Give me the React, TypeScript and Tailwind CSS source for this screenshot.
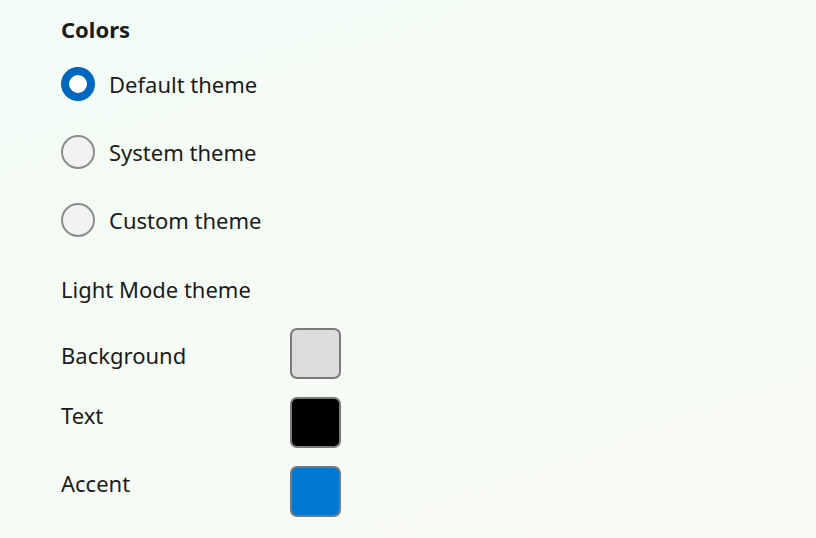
import React, { useState } from "react";

type ThemeOption = "default" | "system" | "custom";

const options: { id: ThemeOption; label: string }[] = [
  { id: "default", label: "Default theme" },
  { id: "system", label: "System theme" },
  { id: "custom", label: "Custom theme" },
];

const swatches = [
  { label: "Background", color: "#dcdcdc", labelClass: "mt-[10px]" },
  { label: "Text", color: "#000000", labelClass: "mt-px" },
  { label: "Accent", color: "#0078d4", labelClass: "mt-0" },
];

function Radio({ checked }: { checked: boolean }) {
  return checked ? (
    <span className="flex h-[34px] w-[34px] shrink-0 items-center justify-center rounded-full bg-[#0067c0]">
      <span className="h-[18px] w-[18px] rounded-full bg-white" />
    </span>
  ) : (
    <span className="h-[34px] w-[34px] shrink-0 rounded-full border-2 border-[#8c8c8c] bg-[#f1f3f1]" />
  );
}

export default function App() {
  const [theme, setTheme] = useState<ThemeOption>("default");

  return (
    <div
      className="min-h-[538px] w-[816px] bg-[linear-gradient(160deg,#f3fbf7_0%,#f5fbf4_50%,#f7f9f5_100%)] pl-[61px] pt-[13px] text-[#1b1b1b]"
      style={{ fontFamily: '"Noto Sans", "Open Sans", sans-serif' }}
    >
      <h2 className="text-[22px] font-bold leading-[32px]">Colors</h2>

      <div className="mt-[22px] flex flex-col gap-[34px]">
        {options.map((o) => (
          <button
            key={o.id}
            onClick={() => setTheme(o.id)}
            className="flex items-center gap-[14px] text-left"
          >
            <Radio checked={theme === o.id} />
            <span className="text-[22px] leading-[34px]">{o.label}</span>
          </button>
        ))}
      </div>

      <div className="mt-[35px] text-[22px] leading-[34px]">Light Mode theme</div>

      <div className="mt-[22px] flex flex-col gap-[18px]">
        {swatches.map((s) => (
          <div key={s.label} className="flex items-start">
            <span className={`w-[229px] text-[22px] leading-[34px] ${s.labelClass}`}>{s.label}</span>
            <span
              className="h-[51px] w-[51px] rounded-[7px] border-2 border-[#7a7a7a]"
              style={{ backgroundColor: s.color }}
            />
          </div>
        ))}
      </div>
    </div>
  );
}
